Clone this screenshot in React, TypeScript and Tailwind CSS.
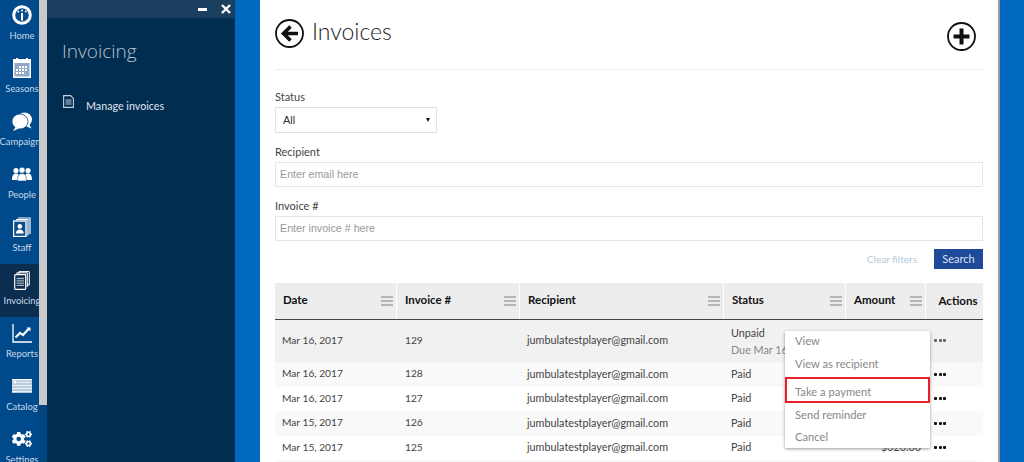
import { FaCogs } from 'react-icons/fa';

const ui = "font-['Lato','Open_Sans',sans-serif]";

function HomeIcon() {
  return (
    <svg viewBox="0 0 20 20" className="h-[20px] w-[20px]">
      <circle cx="10" cy="10" r="8.300" fill="#0a4d8c" stroke="#fff" strokeWidth="3" />
      <rect x="9" y="8" width="2" height="7.500" fill="#fff" />
      <circle cx="10" cy="5.400" r="1" fill="#fff" />
      <circle cx="6.200" cy="6.600" r="1" fill="#fff" />
      <circle cx="13.800" cy="6.600" r="1" fill="#fff" />
    </svg>
  );
}

function CalendarIcon() {
  return (
    <svg viewBox="0 0 18 20" className="h-[20px] w-[18px]">
      <rect x="0" y="1" width="18" height="19" fill="#fff" />
      <rect x="3" y="0" width="2" height="3" fill="#fff" />
      <rect x="13" y="0" width="2" height="3" fill="#fff" />
      <rect x="1.500" y="5" width="15" height="13.500" fill="#8fa9c6" />
      <path d="M6 8h2v2H6zM9 8h2v2H9zM12 8h2v2h-2zM3 11h2v2H3zM6 11h2v2H6zM9 11h2v2H9zM12 11h2v2h-2zM3 14h2v2H3zM6 14h2v2H6zM9 14h2v2H9z" fill="#fff" />
    </svg>
  );
}

function BubblesIcon() {
  return (
    <svg viewBox="0 0 20 19" className="h-[19px] w-[20px]">
      <ellipse cx="12.500" cy="7.500" rx="7.500" ry="7" fill="#fff" />
      <path d="M17 12l2.500 4.500-5-2z" fill="#fff" />
      <ellipse cx="8" cy="9.500" rx="8" ry="7.500" fill="#fff" stroke="#0a4d8c" strokeWidth="0.800" />
      <path d="M3.500 15L1 19l6-2.500z" fill="#fff" />
    </svg>
  );
}

function PeopleIcon() {
  return (
    <svg viewBox="0 0 20 14" className="h-[14px] w-[20px]">
      <circle cx="4" cy="3.500" r="2.600" fill="#fff" />
      <circle cx="16" cy="3.500" r="2.600" fill="#fff" />
      <path d="M0 13c0-4 1-6.500 4-6.500S8 9 8 13zM12 13c0-4 1-6.500 4-6.500s4 2.500 4 6.500z" fill="#fff" />
      <circle cx="10" cy="3.200" r="3" fill="#fff" stroke="#0a4d8c" strokeWidth="0.600" />
      <path d="M5.500 14c0-4.500 1-7.500 4.500-7.500s4.500 3 4.500 7.500z" fill="#fff" stroke="#0a4d8c" strokeWidth="0.600" />
    </svg>
  );
}

function CardsIcon() {
  return (
    <svg viewBox="0 0 18 20" className="h-[20px] w-[18px]">
      <path d="M5 1h12v16" fill="none" stroke="#fff" strokeWidth="1.200" />
      <path d="M3 2.500h12v16" fill="none" stroke="#fff" strokeWidth="1.200" />
      <rect x="0.500" y="4" width="12.500" height="15.500" fill="#0a4d8c" stroke="#fff" strokeWidth="1.400" />
      <circle cx="6.800" cy="9.400" r="2.300" fill="#fff" />
      <path d="M2.800 16.500c.3-3 2-4 4-4s3.700 1 4 4z" fill="#fff" />
    </svg>
  );
}

function DocsIcon() {
  return (
    <svg viewBox="0 0 16 19" className="h-[19px] w-[16px]">
      <path d="M5 3V.6h10.300V14H13" fill="none" stroke="#fff" strokeWidth="1" />
      <path d="M2.800 4V1.800h10.500V16" fill="none" stroke="#fff" strokeWidth="1" />
      <rect x="0.700" y="3.700" width="11" height="14.600" rx="0.800" fill="#0d2b4a" stroke="#fff" strokeWidth="1.200" />
      <path d="M2.500 7.500h7.500M2.500 9.800h7.500M2.500 12.100h7.500M2.500 14.400h7.500" stroke="#9fb4c8" strokeWidth="1.300" />
    </svg>
  );
}

function ChartIcon() {
  return (
    <svg viewBox="0 0 20 19" className="h-[19px] w-[20px]">
      <path d="M1 0v18h19" fill="none" stroke="#fff" strokeWidth="1.300" />
      <path d="M3.500 13.500l4.500-4.500 3 2 6-6.500" fill="none" stroke="#fff" strokeWidth="2.200" />
      <path d="M14.500 3.500h4v4z" fill="#fff" />
    </svg>
  );
}

function CatalogIcon() {
  return (
    <svg viewBox="0 0 20 14" className="h-[14px] w-[20px]">
      <rect width="20" height="14" fill="#b9cbdf" />
      <rect x="0" y="0" width="20" height="1.200" fill="#fff" />
      <circle cx="3" cy="3" r="1.500" fill="#fff" />
      <path d="M6 3.500h13M0 6.500h20M0 9.500h20M0 12.500h20" stroke="#eaf0f6" strokeWidth="1" />
    </svg>
  );
}

const navItems = [
  { label: 'Home', icon: <HomeIcon /> },
  { label: 'Seasons', icon: <CalendarIcon /> },
  { label: 'Campaigns', icon: <BubblesIcon /> },
  { label: 'People', icon: <PeopleIcon /> },
  { label: 'Staff', icon: <CardsIcon /> },
  { label: 'Invoicing', icon: <DocsIcon />, active: true },
  { label: 'Reports', icon: <ChartIcon /> },
  { label: 'Catalog', icon: <CatalogIcon /> },
  { label: 'Settings', icon: <FaCogs className="h-[20px] w-[20px] text-white" /> },
];

function Sidebar() {
  return (
    <div className="-mt-px flex w-[39px] shrink-0 flex-col overflow-hidden">
      {navItems.map((item) => (
        <div key={item.label} className={`h-[53px] w-[39px] shrink-0 ${item.active ? 'bg-[#0b2e50]' : ''}`}>
          <div className="flex w-[44px] flex-col items-center">
            <div className="flex h-[30px] w-full items-center justify-center pt-[2px]">{item.icon}</div>
            <span className="whitespace-nowrap text-[9.400px] leading-[14px] text-[#c9d8e8]">{item.label}</span>
          </div>
        </div>
      ))}
    </div>
  );
}

function Menu() {
  return (
    <svg viewBox="0 0 12 10" className="h-[10px] w-[12px]">
      <path d="M0 1h12M0 5h12M0 9h12" stroke="#a3a3a3" strokeWidth="1.300" />
    </svg>
  );
}

function Dots({ muted = false }: { muted?: boolean }) {
  const color = muted ? 'bg-[#666]' : 'bg-[#111]';
  return (
    <div className="flex gap-[1.500px]">
      <span className={`h-[3px] w-[3px] rounded-[1px] ${color}`} />
      <span className={`h-[3px] w-[3px] rounded-[1px] ${color}`} />
      <span className={`h-[3px] w-[3px] rounded-[1px] ${color}`} />
    </div>
  );
}

const gridCols = 'grid grid-cols-[122px_123px_204px_122px_80px_57px]';

const headers = ['Date', 'Invoice #', 'Recipient', 'Status', 'Amount'];

const rows = [
  { date: 'Mar 16, 2017', num: '129', bg: 'bg-[#f1f1f1]', h: 'h-[42px]', first: true },
  { date: 'Mar 16, 2017', num: '128', bg: 'bg-[#f9f9f9]', h: 'h-[25px]' },
  { date: 'Mar 16, 2017', num: '127', bg: 'bg-white', h: 'h-[24px]' },
  { date: 'Mar 15, 2017', num: '126', bg: 'bg-[#f9f9f9]', h: 'h-[25px]' },
  { date: 'Mar 15, 2017', num: '125', bg: 'bg-white', h: 'h-[24px]' },
];

function Field({ label, placeholder }: { label: string; placeholder: string }) {
  return (
    <div>
      <div className="h-[17px] text-[11px] leading-[17px] text-[#444]">{label}</div>
      <div className="mt-[2px] flex h-[25px] items-center border border-[#e6e6e6] px-[4px] font-['Liberation_Sans',sans-serif] text-[10.700px] text-[#999]">
        {placeholder}
      </div>
    </div>
  );
}

export default function App() {
  return (
    <div className={`flex h-[462px] w-[1024px] overflow-hidden bg-[#0069c0] ${ui}`}>
      <div className="flex w-[47px] shrink-0 bg-[#004a8c]">
        <Sidebar />
        <div className="flex w-[8px] shrink-0 flex-col bg-[#00457f]">
          <div className="h-[405px] bg-[#c9c9c9]" />
        </div>
      </div>

      <div className="flex w-[188px] shrink-0 flex-col bg-[#002d50]">
        <div className="flex h-[18px] items-center justify-end gap-[14px] bg-[#1b3f5f] pr-[4px]">
          <span className="h-[3px] w-[9px] bg-white" />
          <svg viewBox="0 0 10 10" className="h-[10px] w-[10px]">
            <path d="M1 1l8 8M9 1l-8 8" stroke="#fff" strokeWidth="2.400" />
          </svg>
        </div>
        <div className="pl-[15px] pt-[20px] font-['Open_Sans',sans-serif] text-[19px] font-light leading-[26px] text-[#b7c3cf]">
          Invoicing
        </div>
        <div className="flex items-start gap-[12px] pl-[16px] pt-[31px]">
          <svg viewBox="0 0 11 13" className="h-[13px] w-[11px]">
            <path d="M.6.6h7l2.800 2.800v9H.6z" fill="none" stroke="#c4d0db" strokeWidth="1.100" />
            <path d="M2.500 5h6M2.500 7h6M2.500 9h6" stroke="#c4d0db" strokeWidth="1.200" />
          </svg>
          <span className="mt-[3px] text-[10.700px] font-medium leading-[15px] text-[#d7dfe6]">Manage invoices</span>
        </div>
      </div>

      <div className="w-[25px] shrink-0" />

      <div className="relative w-[738px] shrink-0 bg-white pl-[15px] pr-[15px]">
        <div className="flex h-[70px] justify-between border-b border-[#efefef] pt-[19px]">
          <div className="flex items-start gap-[8px]">
            <svg viewBox="0 0 29 29" className="h-[29px] w-[29px]">
              <circle cx="14.500" cy="14.500" r="13.500" fill="none" stroke="#111" strokeWidth="1.800" />
              <path d="M23 14.500H10M15.500 7.500l-7 7 7 7" fill="none" stroke="#111" strokeWidth="3.600" />
            </svg>
            <span className="-mt-px font-['Lato',sans-serif] text-[23px] font-light leading-[26px] text-[#222]">Invoices</span>
          </div>
          <svg viewBox="0 0 29 29" className="mr-[7px] mt-[3px] h-[29px] w-[29px]">
            <circle cx="14.500" cy="14.500" r="13.500" fill="none" stroke="#111" strokeWidth="1.800" />
            <path d="M14.500 6.500v16M6.500 14.500h16" fill="none" stroke="#111" strokeWidth="4" />
          </svg>
        </div>

        <div className="pt-[18px]">
          <div className="h-[17px] text-[11px] leading-[17px] text-[#444]">Status</div>
          <div className="mt-[2px] flex h-[26px] w-[162px] items-center justify-between border border-[#e2e2e2] pl-[7px] pr-[6px] font-['Liberation_Sans',sans-serif] text-[11px] text-[#333]">
            All
            <span className="h-0 w-0 border-x-[2.500px] border-t-[4px] border-x-transparent border-t-[#111]" />
          </div>
        </div>
        <div className="mt-[10px]">
          <Field label="Recipient" placeholder="Enter email here" />
        </div>
        <div className="mt-[10px]">
          <Field label="Invoice #" placeholder="Enter invoice # here" />
        </div>

        <div className="mt-[8px] flex h-[20px] items-center justify-end gap-[17px]">
          <span className="text-[10px] text-[#b4c8de]">Clear filters</span>
          <span className="flex h-[20px] w-[49px] items-center justify-center bg-[#1f4a9a] text-[11px] text-[#d8e2f0]">
            Search
          </span>
        </div>

        <div className="mt-[14px] text-[10.800px]">
          <div className={`${gridCols} h-[37px] border-b-[1.500px] border-[#444] bg-[#ededed] text-[11.500px]`}>
            {headers.map((h) => (
              <div key={h} className="flex items-center justify-between border-r border-white pl-[8px] pr-[3px] font-bold text-[#111]">
                <span className="-mt-[2px]">{h}</span>
                <Menu />
              </div>
            ))}
            <div className="flex items-center justify-center pl-[7px] font-bold text-[#111]">Actions</div>
          </div>
          {rows.map((r) => (
            <div key={r.num} className={`${gridCols} ${r.h} ${r.bg} items-center pb-[1px] text-[#444]`}>
              <div className="pl-[7px] text-[10.200px]">{r.date}</div>
              <div className="pl-[8px] text-[10.200px]">{r.num}</div>
              <div className="pl-[7px]">jumbulatestplayer@gmail.com</div>
              {r.first ? (
                <div className="pl-[7px] leading-[17px]">
                  <div className="text-[#444]">Unpaid</div>
                  <div className="whitespace-nowrap text-[#888]">Due Mar 16</div>
                </div>
              ) : (
                <div className="pl-[7px]">Paid</div>
              )}
              <div className="pr-[5px] text-right text-[#555]">{r.num === '125' ? '$320.00' : ''}</div>
              <div className="pl-[8px]">
                <Dots muted={r.first} />
              </div>
            </div>
          ))}
          <div className="h-[4px] bg-[#f9f9f9]" />
        </div>

        <div className="absolute left-[525px] top-[331px] w-[145px] bg-white pb-[1px] text-[11.200px] text-[#888] shadow-[0_1px_3px_rgba(0,0,0,0.4)]">
          <div className="flex h-[20px] items-center px-[10px] pt-[1px]">View</div>
          <div className="flex h-[26px] items-center px-[10px]">View as recipient</div>
          <div className="flex h-[26px] items-center border-2 border-[#e8202c] px-[8px] pt-[5px]">Take a payment</div>
          <div className="flex h-[24px] items-center px-[10px]">Send reminder</div>
          <div className="flex h-[20px] items-center px-[10px]">Cancel</div>
        </div>
      </div>

      <div className="w-[2px] shrink-0 bg-[#9a9a9a]" />
    </div>
  );
}
